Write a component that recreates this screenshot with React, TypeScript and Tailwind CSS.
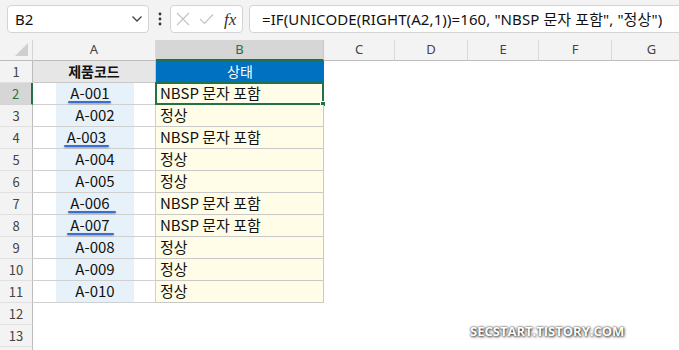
const colHeads = [
  { label: "A", w: "w-[123px]" },
  { label: "B", w: "w-[168px]", active: true },
  { label: "C", w: "w-[71px]" },
  { label: "D", w: "w-[73px]" },
  { label: "E", w: "w-[71px]" },
  { label: "F", w: "w-[73px]" },
  { label: "G", w: "w-[80px]" },
];

// pad = extra right space from trailing NBSP chars (shifts centered text left)
const rows = [
  { code: "A-001", status: "NBSP 문자 포함", pad: "pr-[10px]", line: "left-[12px] w-[43px]" },
  { code: "A-002", status: "정상", pad: "" },
  { code: "A-003", status: "NBSP 문자 포함", pad: "pr-[17px]", line: "left-[8px] w-[45px]" },
  { code: "A-004", status: "정상", pad: "" },
  { code: "A-005", status: "정상", pad: "" },
  { code: "A-006", status: "NBSP 문자 포함", pad: "pr-[10px]", line: "left-[12px] w-[48px]" },
  { code: "A-007", status: "NBSP 문자 포함", pad: "pr-[10px]", line: "left-[11px] w-[47px]" },
  { code: "A-008", status: "정상", pad: "" },
  { code: "A-009", status: "정상", pad: "" },
  { code: "A-010", status: "정상", pad: "" },
];

function RowHead({ n, active }: { n: number; active?: boolean }) {
  return (
    <div
      className={
        active
          ? "w-[33px] h-full shrink-0 bg-[#d6d6d6] border-r-2 border-r-[#217346] border-b border-b-[#d4d4d4] flex items-center justify-center text-[13px] text-[#217346]"
          : "w-[33px] h-full shrink-0 bg-[#f3f3f3] border-r border-r-[#bcbcbc] border-b border-b-[#e0e0e0] flex items-center justify-center text-[13px] text-[#444]"
      }
    >
      {n}
    </div>
  );
}

export default function App() {
  return (
    <div className="w-[679px] h-[350px] overflow-hidden bg-white relative font-['Noto_Sans_CJK_KR',sans-serif] text-[#111]">
      {/* formula bar */}
      <div className="h-[40px] bg-[#f3f3f3] flex items-start pt-[5px] pl-[7px] overflow-hidden">
        <div className="w-[142px] h-[28px] shrink-0 bg-white border border-[#d4d4d4] rounded-[4px] flex items-center justify-between pl-[7px] pr-[5px] text-[15px] font-['Noto_Sans',sans-serif]">
          <span>B2</span>
          <svg width="12" height="8" viewBox="0 0 12 8">
            <path d="M1.5 1.5 L6 6 L10.5 1.5" fill="none" stroke="#444" strokeWidth="1.3" />
          </svg>
        </div>
        <div className="w-[21px] h-[28px] shrink-0 flex items-center justify-center">
          <svg width="4" height="14" viewBox="0 0 4 14">
            <circle cx="2" cy="2" r="1.4" fill="#333" />
            <circle cx="2" cy="7" r="1.4" fill="#333" />
            <circle cx="2" cy="12" r="1.4" fill="#333" />
          </svg>
        </div>
        <div className="w-[73px] h-[28px] shrink-0 bg-white border border-[#d4d4d4] rounded-[4px] flex items-center pl-[5px] gap-[9px]">
          <svg width="14" height="14" viewBox="0 0 14 14">
            <path d="M1 1 L13 13 M13 1 L1 13" stroke="#c4c4c4" strokeWidth="1.2" />
          </svg>
          <svg width="15" height="12" viewBox="0 0 15 12">
            <path d="M1 6 L5.5 10.5 L14 1.5" fill="none" stroke="#c4c4c4" strokeWidth="1.2" />
          </svg>
          <span className="font-['Liberation_Serif',serif] italic text-[17px] leading-none text-[#333] ml-[1px]">fx</span>
        </div>
        <div className="w-[480px] h-[28px] shrink-0 ml-[6px] bg-white border border-[#d4d4d4] rounded-[4px] flex items-center pl-[12px] text-[15px] tracking-[0.1px] font-['Noto_Sans','Noto_Sans_CJK_KR',sans-serif] whitespace-pre">
          =IF(UNICODE(RIGHT(A2,1))=160, "NBSP 문자 포함", "정상")
        </div>
      </div>

      {/* column headers */}
      <div className="h-[21px] flex bg-[#f3f3f3]">
        <div className="w-[33px] h-full shrink-0 border-r border-[#d4d4d4] border-b border-b-[#bcbcbc] flex items-end justify-end pr-[4px] pb-[4px]">
          <svg width="13" height="13" viewBox="0 0 13 13">
            <path d="M13 0 L13 13 L0 13 Z" fill="#cfcfcf" />
          </svg>
        </div>
        {colHeads.map((c) => (
          <div
            key={c.label}
            className={
              c.active
                ? `${c.w} h-full shrink-0 bg-[#d6d6d6] border-r border-[#c8c8c8] border-b-2 border-b-[#217346] flex items-center justify-center text-[13px] text-[#217346] font-['Noto_Sans',sans-serif]`
                : `${c.w} h-full shrink-0 border-r border-[#d9d9d9] border-b border-b-[#bcbcbc] flex items-center justify-center text-[13px] text-[#444] font-['Noto_Sans',sans-serif]`
            }
          >
            {c.label}
          </div>
        ))}
      </div>

      {/* row 1 */}
      <div className="h-[22px] flex">
        <RowHead n={1} />
        <div className="w-[123px] h-full shrink-0 bg-[#e7e6e6] border-r border-b border-[#c8c8c8] flex items-center justify-center text-[14px] font-bold">
          제품코드
        </div>
        <div className="w-[168px] h-full shrink-0 bg-[#0070c0] border-b border-[#c8c8c8] flex items-center justify-center text-[14px] text-white">
          상태
        </div>
      </div>

      {/* data rows */}
      {rows.map((r, i) => (
        <div key={r.code} className="h-[22px] flex">
          <RowHead n={i + 2} active={i === 0} />
          <div className="w-[123px] h-full shrink-0 border-r border-b border-[#d0d0d0] pl-[23px]">
            <div className={`relative w-[78px] h-full bg-[#e7f1fa] flex items-center justify-center text-[15px] ${r.pad}`}>
              {r.code}
              {r.line && (
                <div className={`absolute bottom-[1px] h-[2px] rounded-full bg-[#3b6fcf] shadow-[0_1px_2px_rgba(0,0,0,0.35)] ${r.line}`} />
              )}
            </div>
          </div>
          <div className="relative w-[168px] h-full shrink-0 bg-[#fffde8] border-r border-b border-[#c8c8c8] flex items-center pl-[4px] text-[15px]">
            {r.status}
            {i === 0 && (
              <>
                <div className="absolute -left-[1px] -top-[1px] -right-[1px] -bottom-[1px] border-2 border-[#217346]" />
                <div className="absolute -right-[3px] -bottom-[3px] w-[6px] h-[6px] bg-[#217346] border border-white" />
              </>
            )}
          </div>
        </div>
      ))}

      {/* empty rows */}
      <div className="h-[22px] flex">
        <RowHead n={12} />
      </div>
      <div className="h-[22px] flex">
        <RowHead n={13} />
      </div>
      <div className="h-[22px] flex">
        <div className="w-[33px] h-full bg-[#f3f3f3] border-r border-[#bcbcbc]" />
      </div>

      <div className="absolute left-[470px] top-[322px] text-[13px] font-bold text-white font-['Open_Sans',sans-serif] [text-shadow:0_0_2px_rgba(0,0,0,0.9),1px_1px_3px_rgba(0,0,0,0.7)]">
        SECSTART.TISTORY.COM
      </div>
    </div>
  );
}
